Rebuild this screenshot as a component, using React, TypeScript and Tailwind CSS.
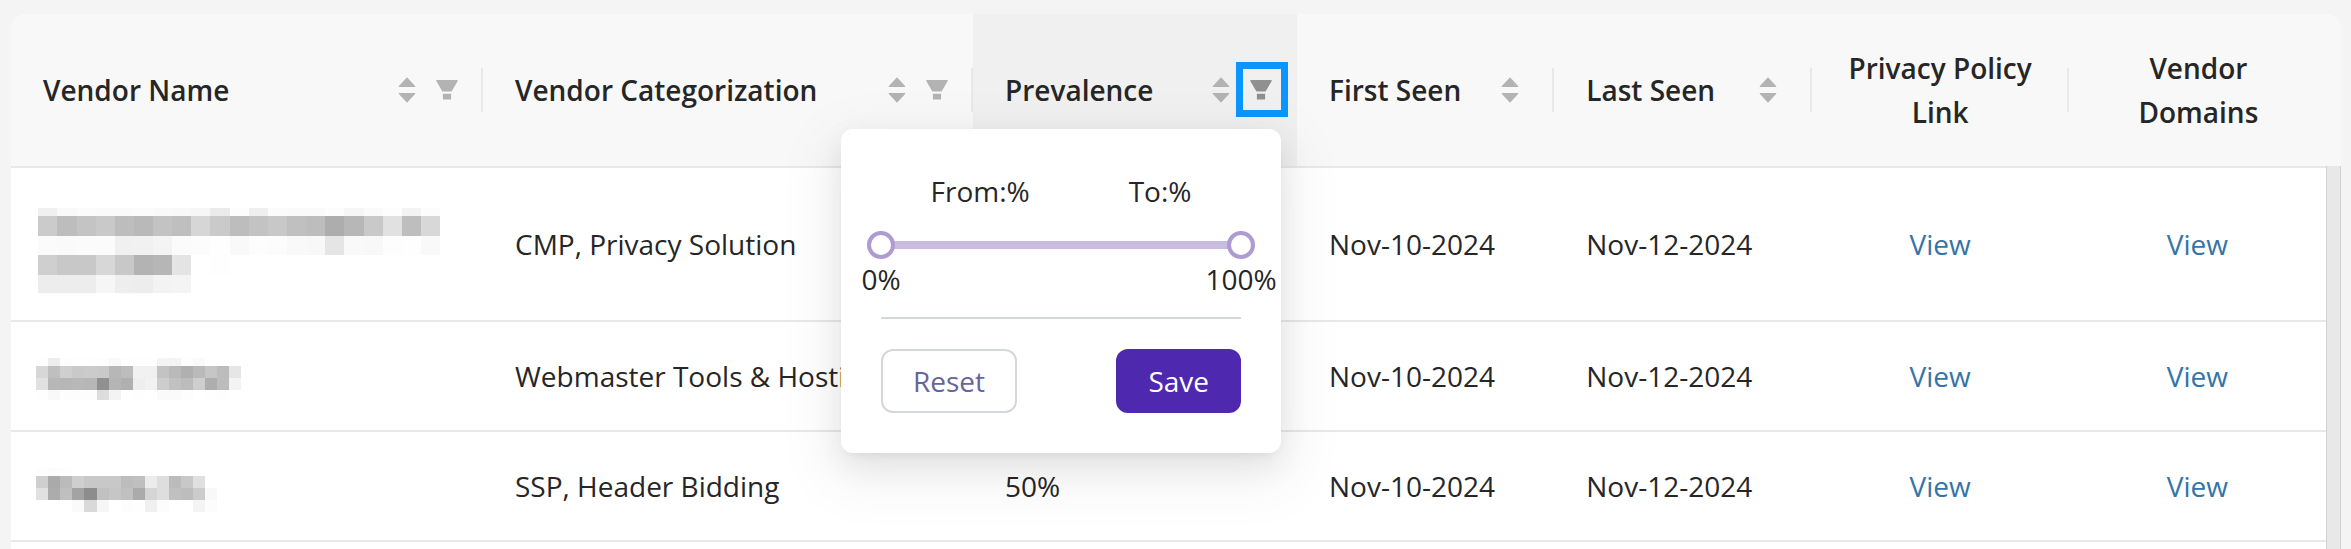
import { useState } from "react";

type Shade = string;

interface MosaicRow {
  y: number;
  height: number;
  shades: Shade[];
}

interface MosaicData {
  x: number;
  cell: number;
  width: number;
  height: number;
  rows: MosaicRow[];
}

const split = (value: string): Shade[] => value.split(" ");

const MOSAICS: MosaicData[] = [
  {
    x: 2.3,
    cell: 19.13,
    width: 406,
    height: 104,
    rows: [
      { y: 16, height: 7.5, shades: split("f0 f9 fb fa fa fb f9 f8 f6 eb fd ef fb fa fa fc f6 fa fd f3 fc") },
      { y: 23.5, height: 20.3, shades: split("cb bd c4 c9 bd b9 c3 bf d6 ca bd c3 c8 c0 bd ad b7 c9 e1 be d8") },
      { y: 43.8, height: 19.4, shades: split("fb fa fb fb f0 f1 f4 fb fc fe f9 fd fc f9 f8 e5 f9 f8 fd fe f9") },
      { y: 63.2, height: 19.3, shades: split("cf c8 c8 d7 c8 b3 b6 e4 ff fe") },
      { y: 82.5, height: 18.5, shades: split("ed ed ed f6 ee ed f3 f4") },
    ],
  },
  {
    x: 0.2,
    cell: 12.07,
    width: 240,
    height: 60,
    rows: [
      { y: 12, height: 8, shades: split("fe ed fd fe fe fd f9 fe fe fe f4 f3 fe fa") },
      { y: 20, height: 12, shades: split("d7 bf cf c9 cb c9 b7 bc f1 f0 c3 b9 b0 ba c6 bc e6") },
      { y: 32, height: 12, shades: split("e1 b7 b6 b8 b6 90 b5 b0 ee f2 cd c1 bc ce ae bc f3") },
      { y: 44, height: 10, shades: split("fe f9 fd fd fd dd f3 ff fe ff fa fa fd ff fe fd") },
    ],
  },
  {
    x: 0.2,
    cell: 12.07,
    width: 240,
    height: 60,
    rows: [
      { y: 12, height: 8, shades: split("fd fc fd") },
      { y: 20, height: 12, shades: split("cf aa bb cf c8 c8 c8 bd bf ec de bb c8 e0") },
      { y: 32, height: 12, shades: split("e1 ac bf a3 8d c1 c6 c0 ab d5 de c0 bd cb f8") },
      { y: 44, height: 12, shades: split("ff ff ff fa d9 f6 ff fd fe f0 fc ff ff f4 fc") },
    ],
  },
];

function Mosaic({ data }: { data: MosaicData }) {
  return (
    <svg
      className="block"
      width={data.width}
      height={data.height}
      viewBox={`0 0 ${data.width} ${data.height}`}
      shapeRendering="crispEdges"
      aria-hidden="true"
    >
      {data.rows.map((row) =>
        row.shades.map((shade, i) => (
          <rect
            key={`${row.y}-${i}`}
            x={data.x + i * data.cell}
            y={row.y}
            width={data.cell}
            height={row.height}
            fill={`#${shade}${shade}${shade}`}
          />
        )),
      )}
    </svg>
  );
}

function SortButton({ label }: { label: string }) {
  return (
    <button type="button" aria-label={`Sort by ${label}`} className="shrink-0 text-[#b3b3b3]">
      <svg className="block" width="18" height="26" viewBox="0 0 18 26" fill="currentColor">
        <path d="M9 0.2 L17.3 9.2 Q17.5 10 16.8 10 H1.2 Q0.5 10 0.7 9.2 Z" />
        <path d="M9 25.8 L17.3 16.8 Q17.5 16 16.8 16 H1.2 Q0.5 16 0.7 16.8 Z" />
      </svg>
    </button>
  );
}

function FunnelIcon() {
  return (
    <svg className="block" width="22" height="20" viewBox="0 0 22 20" fill="currentColor">
      <path d="M0.8 0 H21.2 Q22.1 0.2 21.7 1.1 L15.9 10.9 Q15.5 11.6 14.8 11.6 H7.2 Q6.5 11.6 6.1 10.9 L0.3 1.1 Q-0.1 0.2 0.8 0 Z" />
      <path d="M6.9 13.7 H15.1 V19 Q15.1 19.6 14.5 19.6 H7.5 Q6.9 19.6 6.9 19 Z" />
    </svg>
  );
}

function FilterButton({ label, active = false }: { label: string; active?: boolean }) {
  return (
    <button
      type="button"
      aria-label={`Filter ${label}`}
      aria-expanded={active}
      className={active ? "relative mr-[23px] ml-5 shrink-0 text-[#909090]" : "mr-[23px] ml-5 shrink-0 text-[#b3b3b3]"}
    >
      <FunnelIcon />
      {active && <span className="absolute -top-[18px] -right-4 -bottom-[17px] -left-[14px] border-7 border-[#0a95ff]" />}
    </button>
  );
}

const RANGE =
  "pointer-events-none [grid-area:1/1] h-7 w-full appearance-none bg-transparent [&::-webkit-slider-thumb]:pointer-events-auto [&::-webkit-slider-thumb]:size-7 [&::-webkit-slider-thumb]:appearance-none [&::-webkit-slider-thumb]:rounded-full [&::-webkit-slider-thumb]:border-4 [&::-webkit-slider-thumb]:border-[#ad9bd2] [&::-webkit-slider-thumb]:bg-white";

function PrevalenceFilter() {
  const [from, setFrom] = useState(0);
  const [to, setTo] = useState(100);
  const reset = () => {
    setFrom(0);
    setTo(100);
  };

  return (
    <div
      role="dialog"
      aria-label="Filter by prevalence"
      className="absolute top-[115px] right-4 z-10 w-[440px] rounded-xl bg-white p-10 text-left font-normal shadow-[0_12px_32px_rgba(0,0,0,0.08),0_6px_12px_-8px_rgba(0,0,0,0.12),0_18px_56px_16px_rgba(0,0,0,0.05)]"
    >
      <div className="flex justify-around">
        <label htmlFor="prevalence-from">From:%</label>
        <label htmlFor="prevalence-to">To:%</label>
      </div>
      <div className="-mx-[14px] mt-[18px] grid items-center">
        <div className="mx-[14px] h-2 bg-[#c9bce0] [grid-area:1/1]" />
        <input
          id="prevalence-from"
          type="range"
          min={0}
          max={100}
          value={from}
          onChange={(e) => setFrom(Math.min(Number(e.target.value), to))}
          className={RANGE}
        />
        <input
          id="prevalence-to"
          type="range"
          min={0}
          max={100}
          value={to}
          onChange={(e) => setTo(Math.max(Number(e.target.value), from))}
          className={RANGE}
        />
      </div>
      <div className="-mt-0.5 flex justify-between">
        <span className="flex w-0 justify-center">0%</span>
        <span className="flex w-0 justify-center">100%</span>
      </div>
      <hr className="mt-4 border-t-2 border-[#d5d8da]" />
      <div className="mt-[30px] flex justify-between">
        <button
          type="button"
          onClick={reset}
          className="h-16 rounded-xl border-2 border-[#d5d8da] px-[30px] text-[#67649a]"
        >
          Reset
        </button>
        <button type="button" className="h-16 rounded-xl border-2 border-[#4f28b0] bg-[#4f28b0] px-[30px] text-white">
          Save
        </button>
      </div>
    </div>
  );
}

interface Column {
  title: string;
  sort?: boolean;
  filter?: boolean;
  open?: boolean;
}

const COLUMNS: Column[] = [
  { title: "Vendor Name", sort: true, filter: true },
  { title: "Vendor Categorization", sort: true, filter: true },
  { title: "Prevalence", sort: true, filter: true, open: true },
  { title: "First Seen", sort: true },
  { title: "Last Seen", sort: true },
  { title: "Privacy Policy Link" },
  { title: "Vendor Domains" },
];

function HeaderCell({ column, first, last }: { column: Column; first: boolean; last: boolean }) {
  const { title, sort, filter, open } = column;
  const centered = !sort;
  return (
    <th
      scope="col"
      className={
        open
          ? "relative border-b-2 border-[#e8e8e8] bg-[#f0f0f0] p-0 text-left font-semibold"
          : first
            ? "rounded-tl-2xl border-b-2 border-[#e8e8e8] bg-[#f8f8f8] p-0 text-left font-semibold"
            : "border-b-2 border-[#e8e8e8] bg-[#f8f8f8] p-0 text-left font-semibold"
      }
    >
      <div className="flex items-center py-8">
        <span className={centered ? "flex-1 pr-8 pl-[34px] text-center" : "flex-1 pl-8"}>{title}</span>
        {sort && <SortButton label={title} />}
        {filter && <FilterButton label={title} active={open} />}
        {sort && !filter && <span className="w-[33px]" />}
        {!last && <span className={open ? "h-11 w-0.5" : "h-11 w-0.5 bg-[#e8e8e8]"} />}
      </div>
      {open && <PrevalenceFilter />}
    </th>
  );
}

interface Vendor {
  category: string;
  prevalence: string;
  first: string;
  last: string;
}

const VENDORS: Vendor[] = [
  { category: "CMP, Privacy Solution", prevalence: "", first: "Nov-10-2024", last: "Nov-12-2024" },
  { category: "Webmaster Tools & Hosting", prevalence: "", first: "Nov-10-2024", last: "Nov-12-2024" },
  { category: "SSP, Header Bidding", prevalence: "50%", first: "Nov-10-2024", last: "Nov-12-2024" },
];

const CELL = "border-b-2 border-[#e8e8e8] px-8 py-8";

export default function App() {
  return (
    <main className="flex h-screen flex-col overflow-hidden bg-[#f4f4f4] pt-[14px] pr-[10px] pl-[11px] font-['Open_Sans','Noto_Sans',sans-serif] text-[28px] leading-11 text-[#262626]">
      <div className="flex flex-1 rounded-t-2xl bg-white">
        <div className="min-w-0 flex-1">
          <table className="w-full table-fixed border-separate border-spacing-0">
            <colgroup>
              <col className="w-[472px]" />
              <col className="w-[490px]" />
              <col className="w-[324px]" />
              <col />
              <col />
              <col />
              <col />
            </colgroup>
            <thead>
              <tr>
                {COLUMNS.map((column, i) => (
                  <HeaderCell
                    key={column.title}
                    column={column}
                    first={i === 0}
                    last={i === COLUMNS.length - 1}
                  />
                ))}
              </tr>
            </thead>
            <tbody>
              {VENDORS.map((vendor, i) => (
                <tr key={vendor.category}>
                  <td className="border-b-2 border-[#e8e8e8] px-[25px] py-6">
                    <Mosaic data={MOSAICS[i]} />
                  </td>
                  <td className="border-b-2 border-[#e8e8e8] py-8 pl-8 whitespace-nowrap">{vendor.category}</td>
                  <td className={CELL}>{vendor.prevalence}</td>
                  <td className={CELL}>{vendor.first}</td>
                  <td className={CELL}>{vendor.last}</td>
                  <td className="border-b-2 border-[#e8e8e8] px-8 py-8 text-center">
                    <a href="#privacy-policy" className="text-[#3474a8]">
                      View
                    </a>
                  </td>
                  <td className="border-b-2 border-[#e8e8e8] px-8 py-8 text-center">
                    <a href="#vendor-domains" className="text-[#3474a8]">
                      View
                    </a>
                  </td>
                </tr>
              ))}
            </tbody>
          </table>
        </div>
        <div className="flex w-[15px] shrink-0 flex-col">
          <div className="h-[152px] rounded-tr-2xl bg-[#f8f8f8]" />
          <div className="flex-1 border-x border-[#d2d2d2] bg-[#e8e8e8]" />
        </div>
      </div>
    </main>
  );
}
